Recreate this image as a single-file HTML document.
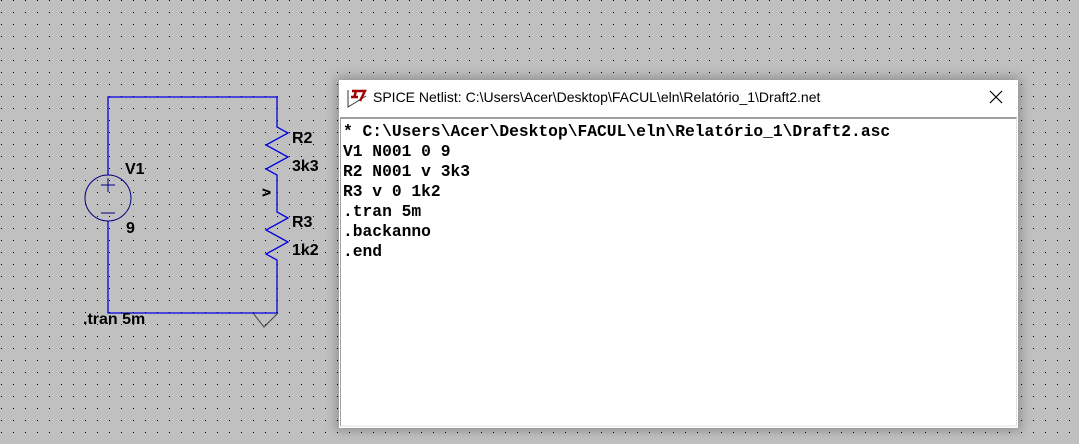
<!DOCTYPE html>
<html><head><style>
body{margin:0;width:1079px;height:444px;overflow:hidden;background:#c0c0c0;font-family:"Liberation Sans",sans-serif;position:relative}
.lbl{position:absolute;font-weight:bold;font-size:16px;color:#000}
.win{position:absolute;left:339px;top:80px;width:679px;height:348px;background:#fff;box-shadow:0 0 10px 3px rgba(0,0,0,0.25)}
.title{position:absolute;left:34px;top:9px;font-size:14px;color:#000;font-family:"Liberation Sans",sans-serif}
.close{position:absolute;left:650px;top:10px}
.ta{position:absolute;left:1px;top:37px;width:675px;height:306px;border-top:2px solid #a0a0a0;border-left:1px solid #a0a0a0;border-right:1px solid #e0e0e0;border-bottom:2px solid #f0f0f0;background:#fff}
pre{margin:0;position:absolute;left:2px;top:3px;font-family:"Liberation Mono",monospace;font-weight:bold;font-size:16.3px;line-height:20px;color:#000}
</style></head><body>
<svg width="1079" height="444" style="position:absolute;left:0;top:0">
<defs><pattern id="g" x="1" y="0" width="12" height="12" patternUnits="userSpaceOnUse"><rect x="0" y="0" width="1" height="1" fill="#000" shape-rendering="crispEdges"/></pattern></defs>
<rect width="1079" height="444" fill="url(#g)"/>
<g fill="none" stroke="#0000e0" stroke-width="1.3">
<polyline points="108,175 108,97 277,97 277,127 288,133 266,145 288,157 266,169 277,175 277,212 288,218 266,230 288,242 266,254 277,260 277,313 108,313 108,221"/>
</g>
<circle cx="108" cy="198" r="23" fill="none" stroke="#000080" stroke-width="1"/>
<g stroke="#000080" stroke-width="1"><line x1="101" y1="185" x2="115" y2="185"/><line x1="108" y1="178" x2="108" y2="192"/><line x1="101" y1="213" x2="115" y2="213"/></g>
<polyline points="253,313 264,327 278,313" fill="none" stroke="#404040" stroke-width="1"/>
</svg>
<div class="lbl" style="left:125px;top:161px">V1</div>
<div class="lbl" style="left:126px;top:220px">9</div>
<div class="lbl" style="left:292px;top:130px">R2</div>
<div class="lbl" style="left:292px;top:158px">3k3</div>
<div class="lbl" style="left:292px;top:214px">R3</div>
<div class="lbl" style="left:292px;top:242px">1k2</div>
<div class="lbl" style="left:262px;top:184px;transform:rotate(-90deg);font-size:15px">v</div>
<div class="lbl" style="left:83px;top:311px">.tran 5m</div>
<div class="win">
<svg width="26" height="24" style="position:absolute;left:7px;top:7px"><polyline points="2,3 2,20 20,9" fill="none" stroke="#333" stroke-width="1"/><path d="M6,4 H19 L14,14 M10,4 L8,11 M5,10 L12,10" fill="none" stroke="#a00000" stroke-width="2.4"/></svg>
<div class="title">SPICE Netlist: C:\Users\Acer\Desktop\FACUL\eln\Relatório_1\Draft2.net</div>
<svg class="close" width="14" height="14"><path d="M1,1 L13,13 M13,1 L1,13" stroke="#000" stroke-width="1.2"/></svg>
<div class="ta"><pre>* C:\Users\Acer\Desktop\FACUL\eln\Relatório_1\Draft2.asc
V1 N001 0 9
R2 N001 v 3k3
R3 v 0 1k2
.tran 5m
.backanno
.end</pre></div>
</div>
</body></html>
